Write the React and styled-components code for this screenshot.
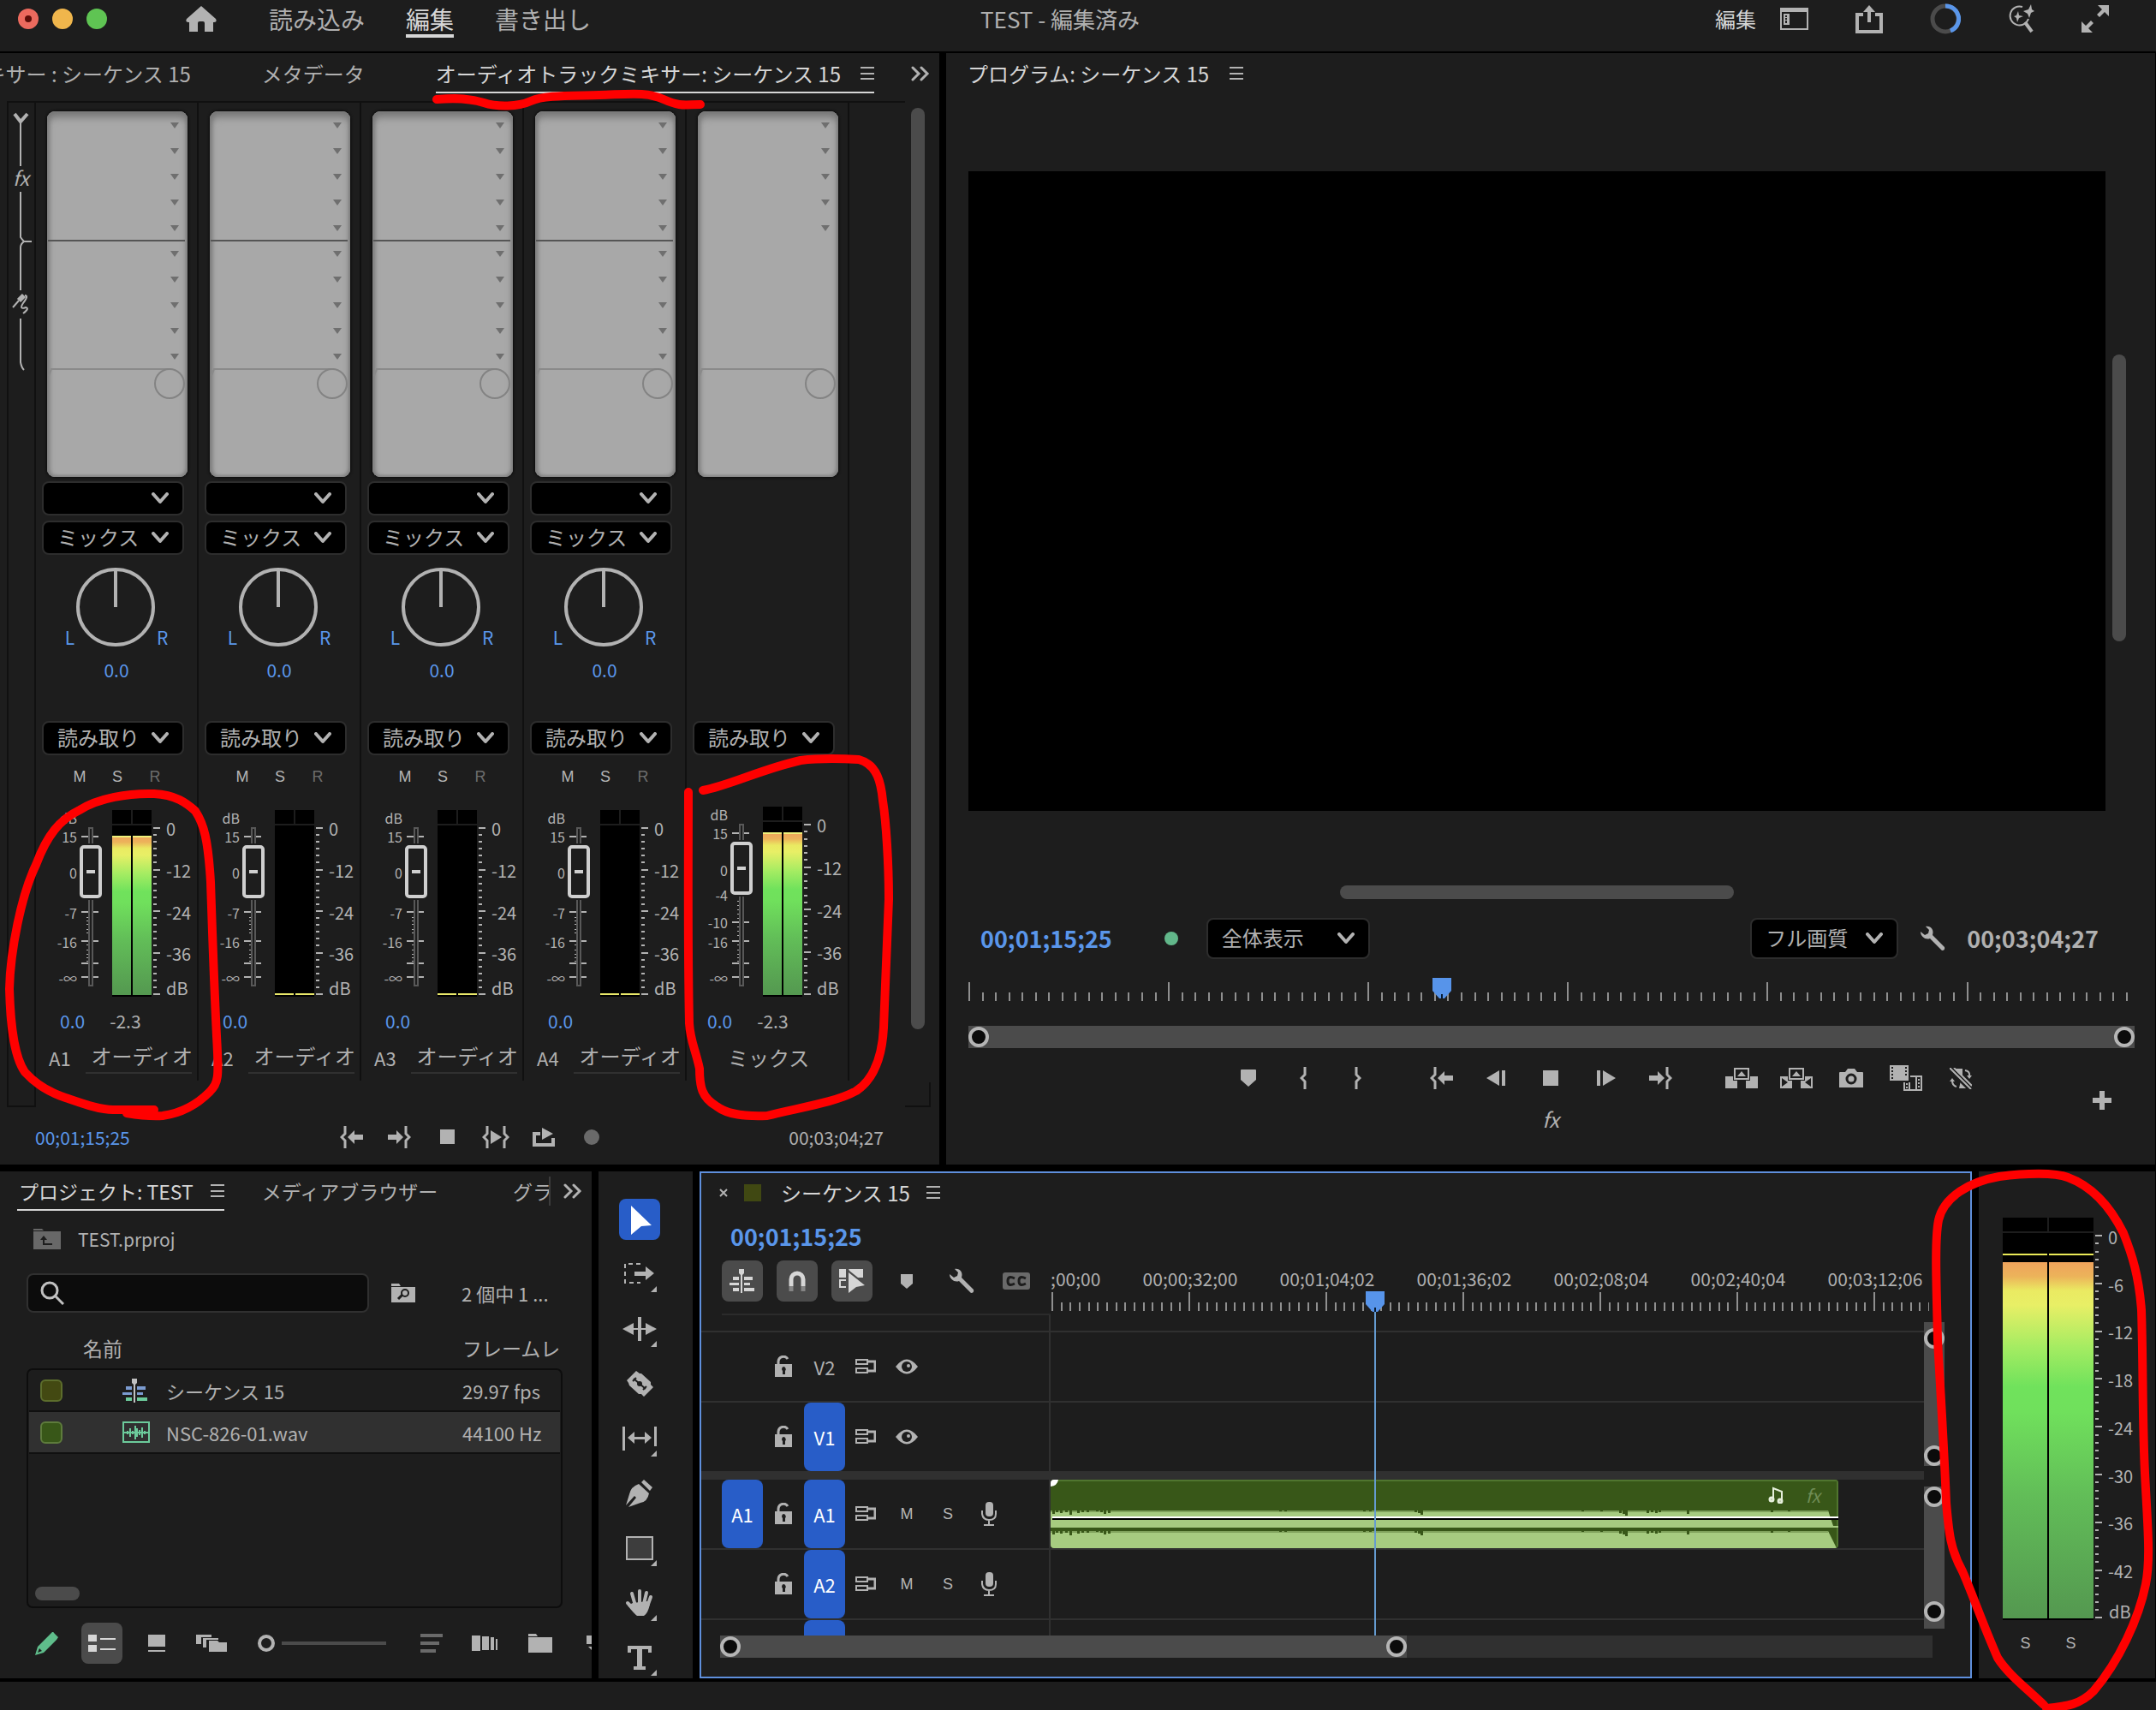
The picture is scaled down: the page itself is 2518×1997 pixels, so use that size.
import styled, { createGlobalStyle } from "styled-components";

const colors = {
    panel: "#1d1d1d",
    line: "#101010",
    track: "#303030",
    bar: "#4b4b4b",
    icon: "#b2b2b2",
    text: "#b0b0b0",
    bright: "#d6d6d6",
    blue: "#5a96ea",
    fill: "#285dc8",
};

const GlobalStyle = createGlobalStyle`
    * {
        box-sizing: border-box;
    }
    body {
        margin: 0;
        background: #000000;
        color: ${colors.text};
        font-family: "Noto Sans CJK JP", "Noto Sans", sans-serif;
        font-size: 21px;
        line-height: 30px;
    }
    button {
        display: flex;
        align-items: center;
        justify-content: center;
        padding: 0;
        border: 0;
        background: none;
        color: inherit;
        font: inherit;
    }
    svg {
        display: block;
        flex: none;
    }
`;

/* ---------- shared parts ---------- */

const Page = styled.div`
    position: relative;
    display: flex;
    flex-direction: column;
    min-height: 100vh;
    overflow: hidden;
`;

const Panel = styled.section`
    display: flex;
    flex-direction: column;
    min-width: 0;
    background: ${colors.panel};
    overflow: hidden;
`;

const TopRow = styled.div`
    display: grid;
    grid-template-columns: minmax(0, 1097fr) minmax(0, 1412fr);
    gap: 8px;
    height: 1298px;
    margin: 2px 1px 8px 0;
`;

const BottomRow = styled.div`
    display: grid;
    grid-template-columns: 691px 110px minmax(0, 1fr) 206px;
    gap: 8px;
    height: 592px;
    margin: 0 1px 4px 0;
`;

const StatusBar = styled.footer`
    flex: 1;
    min-height: 33px;
    background: ${colors.panel};
`;

const Timecode = styled.span`
    color: ${({ $dim }) => ($dim ? colors.text : colors.blue)};
    font-size: ${({ $big }) => ($big ? "27px" : "21px")};
    font-weight: ${({ $big }) => ($big ? 700 : 400)};
    white-space: nowrap;
`;

const Thumb = styled.div`
    width: ${({ $w }) => $w}px;
    height: ${({ $h }) => $h}px;
    border-radius: 8px;
    background: ${colors.bar};
    flex: none;
`;

const SelectBox = styled.label`
    display: grid;
    align-items: center;
    width: ${({ $w }) => $w || 166}px;
    height: ${({ $tall }) => ($tall ? 48 : 40)}px;
    flex: none;

    select,
    svg {
        grid-area: 1 / 1;
    }
    svg {
        justify-self: end;
        margin-right: 18px;
        pointer-events: none;
    }
    select {
        appearance: none;
        width: 100%;
        height: 100%;
        padding: 0 40px 2px 16px;
        border: 2px solid #2d2d2d;
        border-radius: 8px;
        background: #000000;
        color: ${colors.text};
        font: inherit;
        font-size: 24px;
    }
`;

const TabBar = styled.div`
    display: flex;
    align-items: center;
    height: ${({ $h }) => $h || 56}px;
    padding-left: ${({ $left }) => $left || 0}px;
    padding-bottom: ${({ $h }) => ($h ? 0 : 8)}px;
    font-size: 24px;
    white-space: nowrap;
    flex: none;
`;

const Tab = styled.button`
    height: 46px;
    gap: ${({ $gap }) => $gap || 23}px;
    color: ${({ $active }) => ($active ? colors.bright : colors.text)};
    box-shadow: ${({ $line }) =>
        $line ? `inset 0 -2px ${colors.bright}` : "none"};
    white-space: nowrap;
`;

const Knobs = styled.div`
    display: flex;
    flex-direction: ${({ $vertical }) => ($vertical ? "column" : "row")};
    align-items: center;
    justify-content: space-between;
    background: ${colors.bar};
    flex: none;
`;

const Knob = styled.i`
    width: 24px;
    height: 24px;
    border: 4px solid #b5b5b5;
    border-radius: 50%;
    background: #0b0b0b;
`;

/* ---------- icons ---------- */

function Svg({ w, h, children, ...rest }) {
    return (
        <svg
            width={w}
            height={h}
            viewBox={`0 0 ${w} ${h}`}
            fill={colors.icon}
            aria-hidden="true"
            {...rest}
        >
            {children}
        </svg>
    );
}

const Chevron = () => (
    <Svg w={20} h={14}>
        <path d="M2 2L10 11L18 2" fill="none" stroke={colors.icon} strokeWidth="4" strokeLinecap="round" strokeLinejoin="round" />
    </Svg>
);
const Burger = () => (
    <Svg w={16} h={16}>
        <path d="M0 0h16v2H0zM0 7h16v2H0zM0 13h16v2H0z" />
    </Svg>
);
const More = () => (
    <Svg w={22} h={18}>
        <path d="M2 2L9 9L2 16M12 2L19 9L12 16" fill="none" stroke={colors.icon} strokeWidth="3" strokeLinecap="round" />
    </Svg>
);
const HomeIcon = () => (
    <Svg w={36} h={30}>
        <path d="M18 0L35 15Q37 19 33 19H32V30H22V20Q22 18 20 18H16Q14 18 14 20V30H4V19H3Q-1 19 1 15Z" />
    </Svg>
);
const WorkspaceIcon = () => (
    <Svg w={33} h={26}>
        <path d="M0 0h33v26H0zM2 5v19h29V5z" fillRule="evenodd" />
        <path d="M4 7h7v13H4zM6 9v2h2V9zM6 12v2h2v-2zM6 15v3h2v-3z" fillRule="evenodd" />
    </Svg>
);
const ShareIcon = () => (
    <Svg w={32} h={33}>
        <path d="M16 0L23 8H18V20H14V8H9Z" />
        <path d="M0 9h9v4H4v16h24V13h-5V9h9v24H0z" />
    </Svg>
);
const ProgressIcon = () => (
    <Svg w={36} h={36} fill="none" strokeWidth="5">
        <circle cx="18" cy="18" r="15" stroke="#4b4b4b" />
        <path d="M18 3A15 15 0 0 1 24 32" stroke={colors.blue} />
    </Svg>
);
const SparkSearchIcon = () => (
    <Svg w={31} h={34}>
        <path d="M17 3A11 11 0 1 0 24 17" fill="none" stroke={colors.icon} strokeWidth="2" />
        <path d="M12 8L13 13L18 14L13 16L11 21L10 16L7 14L10 13ZM27 0L28 6L31 8L27 10L25 16L23 11L18 8L24 6Z" />
        <path d="M20 21L28 32" stroke={colors.icon} strokeWidth="4" />
    </Svg>
);
const ExpandIcon = () => (
    <Svg w={32} h={32}>
        <path d="M19 0H32V13L27 8L21 14L18 11L24 5ZM13 32H0V19L5 24L11 18L14 21L8 27Z" />
    </Svg>
);
const brace = "M6 0V9L2 13L6 17V26";
const GoIn = ({ flip }) => (
    <Svg w={27} h={26}>
        <g transform={flip ? "translate(27 0) scale(-1 1)" : undefined}>
            <path d={brace} fill="none" stroke={colors.icon} strokeWidth="3" />
            <path d="M9 13L17 5V10H27V16H17V21Z" />
        </g>
    </Svg>
);
const Brace = ({ flip }) => (
    <Svg w={8} h={26}>
        <path
            d={brace}
            transform={flip ? "translate(8 0) scale(-1 1)" : undefined}
            fill="none"
            stroke={colors.icon}
            strokeWidth="3"
        />
    </Svg>
);
const PlayInOut = () => (
    <Svg w={32} h={26}>
        <path d={brace} fill="none" stroke={colors.icon} strokeWidth="3" />
        <path d={brace} transform="translate(32 0) scale(-1 1)" fill="none" stroke={colors.icon} strokeWidth="3" />
        <path d="M10 5L23 13L10 21Z" />
    </Svg>
);
const LoopIcon = () => (
    <Svg w={26} h={22}>
        <path d="M0 5H9V9H4V18H22V12H26V22H0ZM11 0L24 7L11 14Z" />
    </Svg>
);
const StopIcon = ({ s = 17 }) => (
    <Svg w={s} h={s}>
        <rect width={s} height={s} />
    </Svg>
);
const StepIcon = ({ flip }) => (
    <Svg w={23} h={20}>
        <path d="M0 10L15 1V19ZM18 1h4v18h-4z" transform={flip ? "translate(23 0) scale(-1 1)" : undefined} />
    </Svg>
);
const MarkerIcon = () => (
    <Svg w={18} h={20}>
        <path d="M1 0H17Q18 0 18 1V12L9 20L0 12V1Q0 0 1 0Z" />
    </Svg>
);
const LiftIcon = ({ extract }) => (
    <Svg w={38} h={24}>
        <path d="M10 0H28V14H10ZM12 2V12H26V2Z" fillRule="evenodd" />
        <path d="M19 4L24 10H14ZM0 10H9V15H14V24H0ZM29 10H38V24H24V15H29Z" />
        {extract && <path d="M2 12L9 17L2 22ZM36 12L29 17L36 22Z" fill={colors.panel} />}
    </Svg>
);
const CameraIcon = () => (
    <Svg w={28} h={22}>
        <path d="M0 5Q0 4 1 4H7L10 0H18L21 4H27Q28 4 28 5V22H0Z" />
        <circle cx="14" cy="12" r="5" fill="none" stroke={colors.panel} strokeWidth="3" />
    </Svg>
);
const CompareIcon = () => (
    <Svg w={38} h={30}>
        <rect width="22" height="18" />
        <path d="M2 2h2v2H2zM2 6h2v2H2zM2 10h2v2H2zM2 14h2v2H2zM18 2h2v2h-2zM18 6h2v2h-2zM18 10h2v2h-2z" fill={colors.panel} />
        <path d="M24 12H38V30H16V20H18V28H36V14H24Z" />
        <path d="M19 21h2v2h-2zM19 25h2v2h-2zM22 20h2v8h-2zM33 16h2v2h-2zM33 20h2v2h-2zM33 24h2v2h-2zM30 14h2v14h-2z" />
    </Svg>
);
const ProxyIcon = () => (
    <Svg w={26} h={25}>
        <path d="M5 1H15V10ZM11 24H22V18L13 15Z" />
        <path d="M18 3Q24 4 23 10M3 15Q3 21 8 22" fill="none" stroke={colors.icon} strokeWidth="2" />
        <path d="M20 9H26L23 13ZM0 16H6L3 12Z" />
        <path d="M1 1L25 25" stroke={colors.panel} strokeWidth="7" />
        <path d="M0 0L25 25M5 0L26 21" stroke={colors.icon} strokeWidth="2" />
    </Svg>
);
const PlusIcon = () => (
    <Svg w={22} h={22}>
        <path d="M8 0h6v8h8v6h-8v8H8v-8H0V8h8z" />
    </Svg>
);
const WrenchIcon = () => (
    <Svg w={30} h={30}>
        <path d="M7 1C13 0 17 5 15 11L29 25Q30 29 26 29L12 15C7 17 1 13 1 7L6 11L10 9L11 5Z" />
    </Svg>
);

/* ---------- title bar ---------- */

const TitleBar = styled.header`
    display: grid;
    grid-template-columns: minmax(0, 1145fr) minmax(0, 1373fr);
    height: 60px;
    background: ${colors.panel};
    font-size: 28px;
    line-height: 44px;
`;

const TitleSide = styled.div`
    display: flex;
    align-items: center;
    height: 44px;
    padding-left: ${({ $left }) => $left || 0}px;
`;

const FileName = styled.span`
    font-size: 26px;
`;

const Light = styled.button`
    width: 24px;
    height: 24px;
    margin-right: 16px;
    border-radius: 50%;
    background: ${({ $color }) => $color};

    &::after {
        content: "";
        width: 8px;
        height: 8px;
        border-radius: 50%;
        background: ${({ $edited }) => ($edited ? "#5c0d08" : "transparent")};
    }
`;

const HomeButton = styled.button`
    width: 36px;
    margin: 0 61px 0 76px;
`;

const Nav = styled.nav`
    display: flex;
    gap: 48px;
`;

const NavLink = styled.a`
    color: ${({ $active }) => ($active ? colors.bright : colors.text)};
    text-decoration: none;
    box-shadow: ${({ $active }) =>
        $active ? `inset 0 -4px ${colors.bright}` : "none"};
`;

const TitleTools = styled.div`
    display: flex;
    align-items: center;
    gap: 55px;
    margin-left: auto;
    padding-right: 55px;
`;

const Workspace = styled.button`
    gap: 28px;
    color: ${colors.bright};
    font-size: 24px;
`;

function AppTitleBar() {
    return (
        <TitleBar>
            <TitleSide $left={21}>
                <Light $color="#ec6a5e" $edited aria-label="閉じる" />
                <Light $color="#f0b64c" aria-label="しまう" />
                <Light $color="#5fc453" aria-label="拡大" />
                <HomeButton aria-label="ホーム">
                    <HomeIcon />
                </HomeButton>
                <Nav>
                    <NavLink href="#import">読み込み</NavLink>
                    <NavLink href="#edit" $active>
                        編集
                    </NavLink>
                    <NavLink href="#export">書き出し</NavLink>
                </Nav>
            </TitleSide>
            <TitleSide>
                <FileName>TEST - 編集済み</FileName>
                <TitleTools>
                    <Workspace>
                        編集
                        <WorkspaceIcon />
                    </Workspace>
                    <button aria-label="クイック書き出し">
                        <ShareIcon />
                    </button>
                    <button aria-label="進行状況">
                        <ProgressIcon />
                    </button>
                    <button aria-label="検索">
                        <SparkSearchIcon />
                    </button>
                    <button aria-label="フルスクリーン">
                        <ExpandIcon />
                    </button>
                </TitleTools>
            </TitleSide>
        </TitleBar>
    );
}

/* ---------- audio track mixer ---------- */

const MixerTabs = styled(TabBar)`
    justify-content: flex-end;
    padding-right: 11px;
    gap: 83px;

    > :last-child {
        margin-left: -40px;
    }
`;

const MixerBody = styled.div`
    display: flex;
    margin-left: 8px;
    height: 1175px;
`;

const Gutter = styled.div`
    width: 32px;
    border: solid ${colors.line};
    border-width: 2px 0 2px 2px;
    flex: none;
`;

const Strips = styled.div`
    display: flex;
    flex: 1;
    height: 1144px;
    border-top: 2px solid ${colors.line};
`;

const Strip = styled.div`
    width: 190px;
    padding-left: 7px;
    border-left: 2px solid ${colors.line};
    flex: none;
`;

const StripEnd = styled.div`
    border-left: 2px solid ${colors.line};
`;

const GutterFoot = styled.div`
    width: 2px;
    height: 1175px;
    margin-right: -2px;
    background: ${colors.line};
`;

const Rack = styled.div`
    width: 164px;
    height: 427px;
    margin: 10px 0 5px 6px;
    border-radius: 9px;
    background: #a8a8a8;
    box-shadow:
        inset 0 7px 8px #777777,
        inset 3px 0 4px #858585,
        inset -2px -2px 3px #8a8a8a,
        0 0 3px 1px #0c0c0c;
`;

const Sends = styled.div`
    display: flex;
    flex-direction: column;
    gap: 6px;
    height: 86px;
`;

const Pan = styled.div`
    display: flex;
    flex-direction: column;
    align-items: center;
    width: 174px;
    height: 194px;
    padding-top: 15px;
    color: ${colors.blue};
`;

const PanRow = styled.div`
    display: flex;
    align-items: flex-end;
    gap: 2px;
    height: 96px;
    margin-bottom: 8px;

    button {
        align-self: flex-start;
    }
`;

const Modes = styled.div`
    display: flex;
    gap: 28px;
    height: 50px;
    padding-left: 36px;
`;

const Mode = styled.button`
    width: 16px;
    color: ${({ $off }) => ($off ? "#6c6c6c" : "#b5b5b5")};
    font-family: "Liberation Sans", sans-serif;
    font-size: 18px;
`;

const FaderBox = styled.div`
    position: relative;
    height: 238px;
`;

const FaderInput = styled.input`
    position: absolute;
    left: 44px;
    top: ${({ $top }) => $top}px;
    width: 26px;
    height: 202px;
    margin: 0;
    appearance: none;
    background: none;
    writing-mode: vertical-lr;
    direction: rtl;

    &::-webkit-slider-thumb {
        appearance: none;
        width: 26px;
        height: 62px;
        border: 4px solid #cfcfcf;
        border-radius: 5px;
        background: linear-gradient(#cfcfcf, #cfcfcf) center / 10px 4px
            no-repeat ${colors.panel};
        box-shadow: 0 0 0 2px ${colors.panel};
    }
`;

const Levels = styled.div`
    display: flex;
    align-items: center;
    gap: 29px;
    height: 44px;
    padding-left: ${({ $mix }) => ($mix ? 17 : 21)}px;
`;

const TrackName = styled.div`
    display: flex;
    align-items: center;
    gap: ${({ $mix }) => ($mix ? 0 : 17)}px;
    height: 42px;
    padding-left: ${({ $mix }) => ($mix ? 41 : 8)}px;
    font-size: ${({ $mix }) => ($mix ? 24 : 22)}px;
`;

const NameInput = styled.input`
    width: 124px;
    height: 38px;
    padding: 0 0 4px 7px;
    border: 0;
    border-bottom: 2px solid #303030;
    background: none;
    color: ${colors.text};
    font: inherit;
    font-size: 24px;
`;

const ScrollColumn = styled.div`
    display: flex;
    flex-direction: column;
    align-items: center;
    justify-content: space-between;
    width: 30px;
    margin-right: 10px;
    padding-top: 8px;
`;

const Corner = styled.div`
    width: 30px;
    height: 29px;
    border: solid ${colors.line};
    border-width: 0 2px 2px 0;
`;

const Transport = styled.div`
    display: flex;
    align-items: center;
    flex: 1;
    padding: 2px 65px 0 41px;

    > :last-child {
        margin-left: auto;
    }
`;

const TransportButtons = styled.div`
    display: flex;
    margin-left: 231px;

    button {
        width: 56px;
    }
`;

function MeterGradient({ id }) {
    return (
        <linearGradient id={id} x1="0" y1="0" x2="0" y2="1">
            <stop offset="0" stopColor="#efa35c" />
            <stop offset="0.04" stopColor="#ecb35a" />
            <stop offset="0.08" stopColor="#eaea62" />
            <stop offset="0.12" stopColor="#e8ef66" />
            <stop offset="0.24" stopColor="#a4ec62" />
            <stop offset="0.35" stopColor="#70e25c" />
            <stop offset="0.42" stopColor="#70e05c" />
            <stop offset="0.65" stopColor="#62be58" />
            <stop offset="1" stopColor="#549850" />
        </linearGradient>
    );
}

const trackScale = {
    top: 0,
    ticks: [45, 133, 167, 193, 209],
    minor: [139, 143, 147, 153, 157, 171, 177, 182, 186, 190],
    labels: [["dB", 24], ["15", 46], ["0", 88], ["-7", 135], ["-16", 169], ["-∞", 211]],
    levels: [35, 84, 133, 181, 229],
};
const mixScale = {
    top: -4,
    ticks: [41, 145, 167, 193, 209],
    minor: [120, 125, 130, 135, 140, 150, 155, 160, 171, 177, 182, 186, 190],
    labels: [["dB", 20], ["15", 42], ["0", 85], ["-4", 114], ["-10", 146], ["-16", 169], ["-∞", 211]],
    levels: [31, 81, 131, 180, 229],
};

function Fader({ id, mix, live }) {
    const s = mix ? mixScale : trackScale;
    const top = s.top;
    const span = s.levels[4] - s.levels[0];
    return (
        <FaderBox>
            <Svg w={181} h={238} shapeRendering="crispEdges">
                <defs>
                    <MeterGradient id={id} />
                </defs>
                <path d={`M54 ${34 + top}H60V220H54ZM56 ${36 + top}V218H58V${36 + top}Z`} fill="#585858" fillRule="evenodd" />
                {s.ticks.map((y) => (
                    <path key={y} d={`M46 ${y - 1}h8v2h-8zM60 ${y - 1}h6v2h-6z`} />
                ))}
                {s.minor.map((y) => (
                    <rect key={y} x="52" y={y} width="2" height="1" />
                ))}
                <rect x="82" y={14 + top} width="46" height={218 - top} fill="#000" />
                <path d={`M104 ${14 + top}h2v16h-2zM82 ${30 + top}h46v2h-46z`} fill={colors.panel} />
                {live ? (
                    <>
                        <path d={`M82 ${44 + top}h22V230h-22zM106 ${44 + top}h22V230h-22z`} fill={`url(#${id})`} />
                        <path d={`M82 ${44 + top}h22v2h-22zM106 ${44 + top}h22v2h-22z`} fill="#eef07a" />
                    </>
                ) : (
                    <path d="M82 228h22v2h-22zM106 228h22v2h-22z" fill="#e9e86a" />
                )}
                {Array.from({ length: 25 }, (_, i) => (
                    <rect
                        key={i}
                        x="130"
                        y={Math.round(s.levels[0] - 1 + (span * i) / 24)}
                        width={i % 6 ? 4 : 8}
                        height="2"
                    />
                ))}
                <g fontSize="16" textAnchor="end">
                    {s.labels.map(([text, y]) => (
                        <text key={text} x="41" y={y + 6}>
                            {text}
                        </text>
                    ))}
                </g>
                <g fontSize="20">
                    {["0", "-12", "-24", "-36"].map((text, i) => (
                        <text key={text} x="145" y={s.levels[i] + 9}>
                            {text}
                        </text>
                    ))}
                    <text x="145" y="230">
                        dB
                    </text>
                </g>
            </Svg>
            <FaderInput
                type="range"
                $top={26 + top}
                defaultValue={79}
                aria-label="ボリューム"
            />
        </FaderBox>
    );
}

function RackSlots({ mix }) {
    const rows = mix ? 5 : 10;
    return (
        <Svg w={164} h={427}>
            {Array.from({ length: rows }, (_, i) => (
                <path key={i} d={`M144 ${13 + i * 30}h10l-5 7z`} fill="#6f6f6f" />
            ))}
            {!mix && <rect x="1" y="150" width="160" height="2" fill="#555" />}
            <path d="M2 309L5 301H145" fill="none" stroke="#8a8a8a" strokeWidth="2" />
            <circle cx="143" cy="318" r="17" fill="none" stroke="#838383" strokeWidth="2" />
        </Svg>
    );
}

function Select({ value, label, w, tall }) {
    return (
        <SelectBox $w={w} $tall={tall}>
            <select aria-label={label} defaultValue={value}>
                <option>{value}</option>
            </select>
            <Chevron />
        </SelectBox>
    );
}

function ChannelStrip({ name, mix, live }) {
    return (
        <Strip>
            <Rack>
                <RackSlots mix={mix} />
            </Rack>
            <Sends>
                {!mix && <Select value="" label="入力" />}
                {!mix && <Select value="ミックス" label="出力" />}
            </Sends>
            <Pan>
                {!mix && (
                    <>
                        <PanRow>
                            <span>L</span>
                            <button aria-label="パン">
                                <Svg w={92} h={92} fill="none" stroke={colors.icon} strokeWidth="4">
                                    <circle cx="46" cy="46" r="44" />
                                    <path d="M46 2V46" />
                                </Svg>
                            </button>
                            <span>R</span>
                        </PanRow>
                        <span>0.0</span>
                    </>
                )}
            </Pan>
            <Select value="読み取り" label="オートメーションモード" />
            <Modes>
                {!mix && (
                    <>
                        <Mode>M</Mode>
                        <Mode>S</Mode>
                        <Mode $off>R</Mode>
                    </>
                )}
            </Modes>
            <Fader id={`level-${name}`} mix={mix} live={live} />
            <Levels $mix={mix}>
                <Timecode>0.0</Timecode>
                {live && <span>-2.3</span>}
            </Levels>
            <TrackName $mix={mix}>
                {mix ? (
                    "ミックス"
                ) : (
                    <>
                        {name}
                        <NameInput defaultValue="オーディオ" aria-label={name} />
                    </>
                )}
            </TrackName>
        </Strip>
    );
}

function Mixer() {
    return (
        <Panel>
            <MixerTabs>
                <Tab>オーディオクリップミキサー : シーケンス 15</Tab>
                <Tab>メタデータ</Tab>
                <Tab $active $line>
                    オーディオトラックミキサー: シーケンス 15
                    <Burger />
                </Tab>
                <button aria-label="その他のパネル">
                    <More />
                </button>
            </MixerTabs>
            <MixerBody>
                <Gutter>
                    <Svg w={30} h={330} fill="none" stroke={colors.icon} strokeWidth="2">
                        <path d="M7 13L14 22L22 13" strokeWidth="4" />
                        <path d="M14 22V74M14 104V157Q16 160 18 162H27M18 162Q14 165 14 169V219M14 252V303Q15 309 18 312" />
                        <path d="M5 239L12 231M19 225Q24 225 17 234Q12 242 20 239Q25 240 17 246" />
                        <path d="M12 231L18 225" strokeWidth="6" />
                        <text x="5" y="97" fontSize="23" fontStyle="italic" fill={colors.icon} stroke="none">
                            fx
                        </text>
                    </Svg>
                </Gutter>
                <GutterFoot />
                <Strips>
                    <ChannelStrip name="A1" live />
                    <ChannelStrip name="A2" />
                    <ChannelStrip name="A3" />
                    <ChannelStrip name="A4" />
                    <ChannelStrip name="MIX" mix live />
                    <StripEnd />
                </Strips>
                <ScrollColumn>
                    <Thumb $w={16} $h={1076} />
                    <Corner />
                </ScrollColumn>
            </MixerBody>
            <Transport>
                <Timecode>00;01;15;25</Timecode>
                <TransportButtons>
                    <button aria-label="インへ移動">
                        <GoIn />
                    </button>
                    <button aria-label="アウトへ移動">
                        <GoIn flip />
                    </button>
                    <button aria-label="停止">
                        <StopIcon />
                    </button>
                    <button aria-label="インからアウトを再生">
                        <PlayInOut />
                    </button>
                    <button aria-label="ループ">
                        <LoopIcon />
                    </button>
                    <button aria-label="録音">
                        <Svg w={18} h={18}>
                            <circle cx="9" cy="9" r="9" fill="#6a6a6a" />
                        </Svg>
                    </button>
                </TransportButtons>
                <Timecode $dim>00;03;04;27</Timecode>
            </Transport>
        </Panel>
    );
}

/* ---------- program monitor ---------- */

const Stage = styled.div`
    display: flex;
    align-items: center;
    gap: 8px;
    margin-top: 82px;
    padding: 0 34px 0 26px;
`;

const Screen = styled.div`
    flex: 1;
    aspect-ratio: 16 / 9;
    background: #000000;
`;

const StageThumb = styled(Thumb)`
    margin-top: 16px;
`;

const StageScroll = styled.div`
    display: flex;
    justify-content: center;
    padding: 87px 58px 22px 26px;
`;

const MonitorBar = styled.div`
    display: flex;
    align-items: center;
    padding: 0 66px 0 40px;
`;

const Dot = styled.i`
    width: 16px;
    height: 16px;
    margin: 0 33px 0 61px;
    border-radius: 50%;
    background: #62b78a;
`;

const MonitorRight = styled.div`
    display: flex;
    align-items: center;
    gap: 25px;
    margin-left: auto;
`;

const Ruler = styled.div`
    position: relative;
    height: 27px;
    margin: 22px 30px 29px 26px;
`;

const Playhead = styled.div`
    position: absolute;
    top: 0;
    left: ${({ $at }) => $at}%;
    display: flex;
    flex-direction: column;
    align-items: center;
    width: 22px;
    margin-left: -11px;

    &::after {
        content: "";
        width: 2px;
        height: ${({ $line }) => $line || 0}px;
        background: #659bd0;
    }
`;

const MonitorZoom = styled(Knobs)`
    height: 26px;
    margin: 0 24px 0 26px;
`;

const MonitorButtons = styled.div`
    display: grid;
    grid-template-columns: 1fr 320px 1fr;
    margin-top: 20px;
`;

const ButtonGroup = styled.div`
    display: flex;
    height: 30px;
    justify-content: ${({ $end }) => ($end ? "flex-end" : "flex-start")};
    padding: ${({ $end }) => ($end ? "0 33px 0 0" : "0")};

    button {
        width: 64px;
    }
`;

const EditGroup = styled.div`
    display: flex;
    justify-content: space-between;
    padding: 0 51px 0 31px;
`;

const AddButton = styled.button`
    height: 22px;
    margin-top: 30px;
`;

const FxButton = styled.button`
    align-self: center;
    margin-top: -4px;
    font-size: 24px;
    font-style: italic;
`;

function Ticks({ step, h, major, minor }) {
    return (
        <svg width="100%" height={h} fill="#8f8f8f" shapeRendering="crispEdges" aria-hidden="true">
            {Array.from({ length: 200 }, (_, i) => {
                const len = i % 15 ? minor : major;
                return <rect key={i} x={Math.round(i * step)} y={h - len} width="2" height={len} />;
            })}
        </svg>
    );
}

const PlayheadMark = () => (
    <Svg w={22} h={24}>
        <path d="M0 0H22V15L14 24H8L0 15Z" fill="#5794ea" />
        <path d="M11 19V24" stroke="#061b33" strokeWidth="2" />
    </Svg>
);

function ProgramMonitor() {
    return (
        <Panel>
            <TabBar $left={25}>
                <Tab $active $gap={24}>
                    プログラム: シーケンス 15
                    <Burger />
                </Tab>
            </TabBar>
            <Stage>
                <Screen />
                <StageThumb $w={16} $h={335} />
            </Stage>
            <StageScroll>
                <Thumb $w={460} $h={16} />
            </StageScroll>
            <MonitorBar>
                <Timecode $big>00;01;15;25</Timecode>
                <Dot />
                <Select value="全体表示" label="ズームレベル" w={191} tall />
                <MonitorRight>
                    <Select value="フル画質" label="再生時の解像度" w={173} tall />
                    <button aria-label="設定">
                        <WrenchIcon />
                    </button>
                    <Timecode $big $dim>
                        00;03;04;27
                    </Timecode>
                </MonitorRight>
            </MonitorBar>
            <Ruler>
                <Ticks step={15.54} h={27} major={22} minor={10} />
                <Playhead $at={40.8}>
                    <PlayheadMark />
                </Playhead>
            </Ruler>
            <MonitorZoom>
                <Knob />
                <Knob />
            </MonitorZoom>
            <MonitorButtons>
                <ButtonGroup $end>
                    <button aria-label="マーカーを追加">
                        <MarkerIcon />
                    </button>
                    <button aria-label="インをマーク">
                        <Brace />
                    </button>
                    <button aria-label="アウトをマーク">
                        <Brace flip />
                    </button>
                </ButtonGroup>
                <ButtonGroup>
                    <button aria-label="インへ移動">
                        <GoIn />
                    </button>
                    <button aria-label="1 フレーム前へ">
                        <StepIcon />
                    </button>
                    <button aria-label="停止">
                        <StopIcon s={18} />
                    </button>
                    <button aria-label="1 フレーム先へ">
                        <StepIcon flip />
                    </button>
                    <button aria-label="アウトへ移動">
                        <GoIn flip />
                    </button>
                </ButtonGroup>
                <EditGroup>
                    <ButtonGroup>
                        <button aria-label="リフト">
                            <LiftIcon />
                        </button>
                        <button aria-label="抽出">
                            <LiftIcon extract />
                        </button>
                        <button aria-label="フレームを書き出し">
                            <CameraIcon />
                        </button>
                        <button aria-label="比較表示">
                            <CompareIcon />
                        </button>
                        <button aria-label="プロキシの切り替え">
                            <ProxyIcon />
                        </button>
                    </ButtonGroup>
                    <AddButton aria-label="ボタンエディター">
                        <PlusIcon />
                    </AddButton>
                </EditGroup>
            </MonitorButtons>
            <FxButton>fx</FxButton>
        </Panel>
    );
}

/* ---------- project ---------- */

const ProjectTabs = styled(TabBar)`
    padding: 0 11px 0 20px;
    font-size: 23px;
`;

const ProjectTab = styled(Tab)`
    padding-left: 2px;
    margin-right: 44px;
    flex: none;
`;

const CutTab = styled(Tab)`
    justify-content: flex-start;
    width: 44px;
    height: 34px;
    margin: 0 15px 0 auto;
    border-right: 2px solid #3c3c3c;
    overflow: hidden;
`;

const BinPath = styled.div`
    display: flex;
    align-items: center;
    gap: 20px;
    height: 66px;
    padding-left: 39px;
    font-size: 21px;
`;

const SearchRow = styled.div`
    display: flex;
    align-items: center;
    height: 46px;
    margin: 7px 0 0 31px;
    font-size: 22px;
`;

const SearchBox = styled.label`
    display: flex;
    align-items: center;
    gap: 12px;
    width: 400px;
    height: 46px;
    margin-right: 26px;
    padding: 0 14px;
    border: 2px solid #303030;
    border-radius: 8px;
    background: #0c0c0c;

    input {
        flex: 1;
        min-width: 0;
        border: 0;
        background: none;
        color: inherit;
        font: inherit;
    }
`;

const Count = styled.span`
    margin-left: 54px;
`;

const ListArea = styled.div`
    position: relative;
    margin: 20px 34px 0 31px;
`;

const ListScroll = styled.div`
    position: absolute;
    left: 10px;
    bottom: 9px;
`;

const BinTable = styled.table`
    display: block;
    font-size: 22px;

    thead {
        display: block;
    }
    tr {
        display: grid;
        grid-template-columns: 63px 1fr 114px;
        align-items: center;
    }
    thead tr {
        height: 45px;
        margin: 0 3px;
        padding-bottom: 4px;
        font-size: 23px;
    }
    th {
        padding: 0;
        font-weight: 400;
        line-height: 36px;
        text-align: left;
        white-space: nowrap;
        overflow: hidden;
    }
    td {
        padding: 0;
    }
    tbody {
        display: block;
        height: 280px;
        border: 2px solid #0d0d0d;
        border-radius: 7px;
    }
`;

const BinRow = styled.tr`
    height: 49px;
    margin: 0 1px;
    border-bottom: 2px solid #101010;
    background: ${({ $selected }) => ($selected ? "#303030" : "none")};
`;

const Swatch = styled.span`
    display: block;
    width: 26px;
    height: 26px;
    margin-left: 13px;
    border: 2px solid ${({ $edge }) => $edge};
    border-radius: 6px;
    background: ${({ $color }) => $color};
`;

const ItemCell = styled.div`
    display: grid;
    grid-template-columns: 32px 1fr;
    align-items: center;
    gap: 19px;
    margin-left: 46px;
`;

const ProjectTools = styled.div`
    display: flex;
    align-items: center;
    height: 82px;
    padding-left: 41px;
`;

const ViewButton = styled.button`
    width: 48px;
    height: 48px;
    margin: 0 30px 0 27px;
    border-radius: 8px;
    background: ${colors.bar};
`;

const ZoomSlider = styled.input`
    appearance: none;
    width: 150px;
    height: 20px;
    margin: 0 40px 0 36px;
    background: linear-gradient(${colors.bar}, ${colors.bar}) right / 122px 4px
        no-repeat;

    &::-webkit-slider-thumb {
        appearance: none;
        width: 20px;
        height: 20px;
        border: 4px solid ${colors.icon};
        border-radius: 50%;
        background: ${colors.panel};
    }
`;

const Spaced = styled.button`
    margin-right: ${({ $gap }) => $gap}px;
`;

const SequenceIcon = ({ mono }) => {
    const a = mono ? colors.bright : "#7b9bd0";
    const b = mono ? colors.bright : "#6ccb9b";
    return (
        <Svg w={30} h={28}>
            <path d="M4 9h7v4H4zM17 9h10v4H17zM0 16h11v3H0zM17 16h7v3H17z" fill={a} />
            <path d="M4 22h7v4H4zM17 22h12v4H17z" fill={b} />
            <path d="M11 0H17V5L15 7V28H13V7L11 5Z" fill={mono ? colors.bright : "#c0c0c0"} />
        </Svg>
    );
};
const WaveIcon = () => (
    <Svg w={32} h={25} fill="none" stroke="#6ccb9b" strokeWidth="2">
        <rect x="1" y="1" width="30" height="23" />
        <path d="M2 13H30M6 11V15M9 8V18M12 11V15M15 5V21M17 8V18M20 10V16M23 7V19M26 11V15" />
    </Svg>
);
const FolderIcon = ({ children }) => (
    <Svg w={28} h={22}>
        <path d="M0 0H9L11 3H0ZM0 4H28V22H0Z" />
        {children}
    </Svg>
);

const bin = [
    { name: "シーケンス 15", rate: "29.97 fps", color: "#434912", edge: "#5c6d2c", Icon: SequenceIcon },
    { name: "NSC-826-01.wav", rate: "44100 Hz", color: "#385718", edge: "#5d7b3c", Icon: WaveIcon, selected: true },
];

function Project() {
    return (
        <Panel>
            <ProjectTabs $h={46}>
                <ProjectTab $active $line $gap={20}>
                    プロジェクト: TEST
                    <Burger />
                </ProjectTab>
                <Tab>メディアブラウザー</Tab>
                <CutTab>グラフィック</CutTab>
                <button aria-label="その他のパネル">
                    <More />
                </button>
            </ProjectTabs>
            <BinPath>
                <Svg w={32} h={24} fill="#686868">
                    <path d="M0 0H10L12 2H0ZM0 3H32V24H0Z" />
                    <path d="M12 8L16 13H13V17H22V19H11V13H8Z" fill="#1d1d1d" />
                </Svg>
                TEST.prproj
            </BinPath>
            <SearchRow>
                <SearchBox>
                    <Svg w={28} h={28} fill="none" stroke="#c0c0c0" strokeWidth="3">
                        <circle cx="11" cy="11" r="9" />
                        <path d="M18 18L27 27" />
                    </Svg>
                    <input type="search" aria-label="検索" />
                </SearchBox>
                <button aria-label="検索ビン">
                    <FolderIcon>
                        <path d="M8 18L13 13" stroke="#1d1d1d" strokeWidth="3" />
                        <circle cx="16" cy="11" r="4" fill="none" stroke="#1d1d1d" strokeWidth="2" />
                    </FolderIcon>
                </button>
                <Count>2 個中 1 ...</Count>
            </SearchRow>
            <ListArea>
                <BinTable>
                    <thead>
                        <tr>
                            <th />
                            <th>名前</th>
                            <th>フレームレート</th>
                        </tr>
                    </thead>
                    <tbody>
                        {bin.map(({ name, rate, color, edge, Icon, selected }) => (
                            <BinRow key={name} $selected={selected}>
                                <td>
                                    <Swatch $color={color} $edge={edge} />
                                </td>
                                <td>
                                    <ItemCell>
                                        <Icon />
                                        {name}
                                    </ItemCell>
                                </td>
                                <td>{rate}</td>
                            </BinRow>
                        ))}
                    </tbody>
                </BinTable>
                <ListScroll>
                    <Thumb $w={52} $h={16} />
                </ListScroll>
            </ListArea>
            <ProjectTools>
                <button aria-label="書き込み可">
                    <Svg w={27} h={27} fill="#5fbd8b">
                        <path d="M18 2L20 0Q21 -1 22 1L27 6L25 9L10 24L0 27L3 17ZM5 19L3 24L8 22Z" fillRule="evenodd" />
                    </Svg>
                </button>
                <ViewButton aria-label="リスト表示">
                    <Svg w={32} h={20} fill={colors.bright}>
                        <path d="M0 0h10v8H0zM0 12h10v8H0zM14 4h18v2H14zM14 16h18v2H14z" />
                    </Svg>
                </ViewButton>
                <Spaced $gap={36} aria-label="アイコン表示">
                    <Svg w={20} h={20}>
                        <path d="M0 0h20v14H0zM0 18h20v2H0z" />
                    </Svg>
                </Spaced>
                <button aria-label="フリーフォーム表示">
                    <Svg w={36} h={20}>
                        <path d="M0 0h18v3H6v8H0zM8 4h18v2H12v9H8z" />
                        <path d="M15 7H25L27 9H36V20H15Z" />
                    </Svg>
                </button>
                <ZoomSlider type="range" defaultValue={0} aria-label="サムネールサイズ" />
                <Spaced $gap={34} aria-label="並べ替え">
                    <Svg w={26} h={22} fill="#6a6a6a">
                        <path d="M0 0h26v4H0zM0 9h22v4H0zM0 18h18v4H0z" />
                    </Svg>
                </Spaced>
                <Spaced $gap={36} aria-label="シーケンスへオート編集">
                    <Svg w={30} h={18}>
                        <path d="M0 0h10v18H0zM12 1h8v16h-8zM22 2h4v15h-4zM28 4h2v13h-2z" />
                    </Svg>
                </Spaced>
                <Spaced $gap={40} aria-label="新規ビン">
                    <FolderIcon />
                </Spaced>
                <Svg w={6} h={18}>
                    <path d="M0 0h6v10H0zM2 13h4v4z" />
                </Svg>
            </ProjectTools>
        </Panel>
    );
}

/* ---------- tools ---------- */

const ToolList = styled(Panel)`
    align-items: center;
    gap: 16px;
    padding: 32px 14px 0 0;
`;

const Tool = styled.button`
    position: relative;
    width: 48px;
    height: 48px;
    border-radius: 8px;
    background: ${({ $active }) => ($active ? colors.fill : "none")};
    flex: none;

    &::after {
        content: "";
        position: absolute;
        right: 4px;
        bottom: 3px;
        border: solid transparent;
        border-width: 7px 0 0 7px;
        border-bottom: ${({ $more }) =>
            $more ? `7px solid ${colors.icon}` : "0"};
        border-top: 0;
    }
`;

const tools = [
    {
        name: "選択ツール",
        active: true,
        art: <path d="M14 8L38 31L26 32L14 42Z" fill="#fff" />,
    },
    {
        name: "トラックの前方選択ツール",
        more: true,
        art: (
            <>
                <path d="M25 12H7V34H25" fill="none" stroke={colors.icon} strokeWidth="2" strokeDasharray="5 4" />
                <path d="M18 21H31V15L41 23L31 31V26H18Z" />
            </>
        ),
    },
    {
        name: "リップルツール",
        more: true,
        art: <path d="M4 24L17 17V23H22V10H26V23H31V17L44 24L31 31V25H26V38H22V25H17V31Z" />,
    },
    {
        name: "レーザーツール",
        art: (
            <>
                <path d="M20 9L24 12L26 12L37 22L37 25L40 28L29 39L26 36L23 36L12 26L11 23L9 20Z" />
                <path d="M17 18L31 30M16 21L20 17M28 31L32 27" stroke={colors.panel} strokeWidth="2" />
                <circle cx="24" cy="24" r="3" fill={colors.panel} />
            </>
        ),
    },
    {
        name: "スリップツール",
        more: true,
        art: <path d="M4 10H7V38H4ZM41 10H44V33H41ZM10 23L18 16V22H30V16L38 23L30 30V25H18V30Z" />,
    },
    {
        name: "ペンツール",
        art: (
            <>
                <path d="M23 13L35 24Q33 34 25 35L11 40L20 29L18 27L8 38L12 25Q14 16 23 13ZM26 11L29 8L39 17L36 21Z" />
            </>
        ),
    },
    {
        name: "長方形ツール",
        more: true,
        art: <path d="M9 11H39V37H9Z" fill="#3d3d3d" stroke={colors.icon} strokeWidth="2" />,
    },
    {
        name: "手のひらツール",
        more: true,
        art: (
            <>
                <path d="M16 24L33 22L36 25Q34 36 29 39H21Q18 37 10 27Z" />
                <path
                    d="M19 27L15 13M24 25L24 10M29 25L32 12M33 28L37 17M19 33L10 24"
                    fill="none"
                    stroke={colors.icon}
                    strokeWidth="4"
                    strokeLinecap="round"
                />
            </>
        ),
    },
    {
        name: "文字ツール",
        more: true,
        art: (
            <>
                <path d="M10 10H38V18H34V14H27V34H31V38H17V34H21V14H14V18H10Z" />
            </>
        ),
    },
];

function Toolbar() {
    return (
        <ToolList>
            {tools.map(({ name, art, active, more }) => (
                <Tool key={name} aria-label={name} $active={active} $more={more}>
                    <Svg w={48} h={48}>
                        {art}
                    </Svg>
                </Tool>
            ))}
        </ToolList>
    );
}

/* ---------- timeline ---------- */

const TimelinePanel = styled(Panel)`
    border: 2px solid #5f8fdc;
`;

const SequenceTabs = styled(TabBar)`
    padding-left: 20px;
    gap: 18px;
`;

const SeqSwatch = styled.i`
    width: 20px;
    height: 20px;
    margin-right: 5px;
    background: #404812;
`;

const SeqTime = styled.div`
    display: flex;
    align-items: center;
    height: 56px;
    padding-left: 34px;
`;

const TimeHeader = styled.div`
    display: grid;
    grid-template-columns: 408px minmax(0, 1fr);
    height: 64px;
    padding-right: 48px;
`;

const SeqTools = styled.div`
    display: flex;
    align-items: flex-start;
    gap: 16px;
    margin-left: 24px;
    border-bottom: 2px solid #2b2b2b;
`;

const SeqTool = styled.button`
    width: 48px;
    height: 48px;
    border-radius: 8px;
    background: ${({ $on }) => ($on ? colors.bar : "none")};
    flex: none;
`;

const TimeRuler = styled.div`
    height: 59px;
    overflow: hidden;
`;

const TimeLabels = styled.div`
    display: flex;
    height: 37px;
    margin-left: -77px;
    padding-top: 6px;

    span {
        width: 160px;
        text-align: center;
        flex: none;
    }
`;

const TickRow = styled.div`
    padding-left: 1px;
`;

const TrackArea = styled.div`
    position: relative;
    display: grid;
    grid-template-columns: minmax(0, 1fr) 24px;
    height: 374px;
    padding-right: 30px;
`;

const TrackLane = styled.div`
    display: grid;
    grid-template-columns: 408px minmax(0, 1fr);
    height: ${({ $h }) => $h || 82}px;
    border-bottom: ${({ $thick }) => ($thick ? 10 : 2)}px solid ${colors.track};
    border-bottom-width: ${({ $last }) => ($last ? "0" : undefined)};
    overflow: hidden;
`;

const TrackHead = styled.div`
    display: grid;
    grid-template-columns: repeat(7, 48px);
    align-items: center;
    justify-items: center;
    padding-left: 24px;
    border-right: 2px solid ${colors.track};
`;

const Patch = styled.button`
    width: 48px;
    height: ${({ $cut }) => ($cut ? 40 : 80)}px;
    align-self: start;
    border-radius: 8px;
    background: ${({ $on }) => ($on ? colors.fill : "none")};
    color: ${({ $on }) => ($on ? "#ffffff" : colors.text)};
    font-size: 22px;
`;

const VerticalBars = styled.div`
    display: flex;
    flex-direction: column;
    gap: 24px;
    padding-top: 8px;
`;

const VBar = styled(Knobs)`
    width: 24px;
    height: ${({ $h }) => $h}px;
    padding: ${({ $pad }) => $pad};
`;

const Clip = styled.div`
    position: relative;
    width: ${({ $w }) => $w}%;
    height: 80px;
    border-radius: 4px;
    overflow: hidden;

    > svg {
        width: 100%;
    }
`;

const ClipBadges = styled.div`
    position: absolute;
    top: 3px;
    right: 21px;
    display: flex;
    align-items: center;
    gap: 26px;
    color: #6f8c55;
    font-style: italic;
`;

const PlayheadLayer = styled.div`
    position: absolute;
    inset: -28px 54px 0 408px;
    pointer-events: none;
`;

const TimelineZoom = styled.div`
    display: flex;
    height: 26px;
    margin: 0 44px 0 22px;
    background: ${colors.track};
`;

const TimelineRange = styled(Knobs)`
    width: calc(57% - 5px);
`;

const LockIcon = () => (
    <Svg w={20} h={26}>
        <path d="M4 11V7A6 6 0 0 1 15 4" fill="none" stroke={colors.icon} strokeWidth="3" />
        <path d="M0 10H20V25H0ZM10 13A3 3 0 0 0 9 18V22H12V18A3 3 0 0 0 10 13Z" fillRule="evenodd" />
    </Svg>
);
const SyncIcon = () => (
    <Svg w={24} h={20} fill="none" stroke={colors.icon} strokeWidth="2">
        <path d="M1 2H14V7H1ZM1 12H14V17H1Z" />
        <path d="M14 4H23V15H14" strokeWidth="3" />
    </Svg>
);
const EyeIcon = () => (
    <Svg w={26} h={18}>
        <path d="M0 9Q13 -8 26 9Q13 26 0 9Z" />
        <circle cx="13" cy="9" r="6" fill={colors.panel} />
        <circle cx="15" cy="8" r="2" />
    </Svg>
);
const MicIcon = () => (
    <Svg w={18} h={28}>
        <rect x="5" y="0" width="9" height="17" rx="4" />
        <path d="M1 10V14Q2 21 9 21Q17 21 17 14V10M9 21V27M3 27H15" fill="none" stroke={colors.icon} strokeWidth="2" />
    </Svg>
);

const lanes = [
    { name: "V2", video: true },
    { name: "V1", video: true, on: true, h: 90, thick: true },
    { name: "A1", on: true, source: "A1", clip: true },
    { name: "A2", on: true },
    { name: "A3", on: true, cut: true, h: 18 },
];

const times = [
    "00;00;00;00",
    "00;00;32;00",
    "00;01;04;02",
    "00;01;36;02",
    "00;02;08;04",
    "00;02;40;04",
    "00;03;12;06",
];

// x position and depth of each dip in the wave form
const bumps = [
    [2, 4], [6, 2], [11, 3], [17, 2], [22, 5], [31, 3], [36, 2], [42, 2], [53, 1], [58, 2], [62, 4], [67, 3],
    [267, 1], [273, 1], [365, 1], [372, 1], [425, 2], [429, 3], [432, 5], [620, 1], [642, 1], [664, 3], [668, 4],
    [671, 6], [696, 3], [701, 2], [706, 3], [710, 2], [743, 4], [841, 2], [861, 1],
];

function Lane({ name, video, on, source, clip, cut, h, thick }) {
    return (
        <TrackLane $h={h} $thick={thick} $last={cut}>
            <TrackHead>
                {source ? <Patch $on>{source}</Patch> : <span />}
                {cut ? (
                    <span />
                ) : (
                    <button aria-label={`${name} ロック`}>
                        <LockIcon />
                    </button>
                )}
                <Patch $on={on} $cut={cut} aria-label={name}>
                    {cut ? "" : name}
                </Patch>
                {!cut && (
                    <>
                        <button aria-label="同期ロック">
                            <SyncIcon />
                        </button>
                        {video ? (
                            <button aria-label="トラック出力">
                                <EyeIcon />
                            </button>
                        ) : (
                            <>
                                <Mode>M</Mode>
                                <Mode>S</Mode>
                                <button aria-label="ボイスオーバー">
                                    <MicIcon />
                                </button>
                            </>
                        )}
                    </>
                )}
            </TrackHead>
            {clip && (
                <Clip $w={90.2}>
                    <svg height="80" viewBox="0 0 920 80" preserveAspectRatio="none" aria-hidden="true">
                        <rect width="920" height="80" fill="#385718" />
                        <path d="M0 1H919V80" fill="none" stroke="#50752f" strokeWidth="2" />
                        <path d="M0 36H908L914 54H920V56H0ZM0 60H908L918 80H0Z" fill="#a6cb80" />
                        <path d="M0 36H908V38H0ZM0 60H908V62H0Z" fill="#80a25c" />
                        {bumps.map(([x, d]) => (
                            <path key={x} d={`M${x} 36h3v${d}h-3zM${x} 60h3v${d}h-3z`} fill="#385718" />
                        ))}
                        <rect x="2" y="43" width="918" height="2" fill="#fff" />
                        <rect x="2" y="45" width="918" height="2" fill="#000" />
                        <path d="M0 0H9Q8 7 0 8Z" fill="#fff" />
                    </svg>
                    <ClipBadges>
                        <Svg w={18} h={20} fill="none" stroke="#e6efdc" strokeWidth="2">
                            <path d="M6 15V2L16 6V17" />
                            <circle cx="4" cy="15" r="2" strokeWidth="3" />
                            <circle cx="14" cy="17" r="2" strokeWidth="3" />
                        </Svg>
                        fx
                    </ClipBadges>
                </Clip>
            )}
        </TrackLane>
    );
}

function Timeline() {
    return (
        <TimelinePanel>
            <SequenceTabs $h={46}>
                <button aria-label="閉じる">
                    <Svg w={12} h={12}>
                        <path d="M2 2L10 10M10 2L2 10" stroke={colors.icon} strokeWidth="2" />
                    </Svg>
                </button>
                <SeqSwatch />
                <Tab $active $gap={19}>
                    シーケンス 15
                    <Burger />
                </Tab>
            </SequenceTabs>
            <SeqTime>
                <Timecode $big>00;01;15;25</Timecode>
            </SeqTime>
            <TimeHeader>
                <SeqTools>
                    <SeqTool $on aria-label="ネスト">
                        <SequenceIcon mono />
                    </SeqTool>
                    <SeqTool $on aria-label="スナップ">
                        <Svg w={20} h={24} fill="none" strokeWidth="5">
                            <path d="M3 18V10A7 7 0 0 1 17 10V18" stroke={colors.bright} />
                            <path d="M3 18V24M17 18V24" stroke="#858585" />
                        </Svg>
                    </SeqTool>
                    <SeqTool $on aria-label="リンクされた選択">
                        <Svg w={30} h={28} fill={colors.bright}>
                            <path d="M0 0H8V10H0ZM11 0H28V10H22L12 2ZM0 12H8V14H2V20H8V22H0Z" />
                            <path d="M11 4L30 19L20 21L11 28Z" />
                        </Svg>
                    </SeqTool>
                    <SeqTool aria-label="マーカーを追加">
                        <Svg w={14} h={18}>
                            <path d="M0 1H14V12L7 18L0 12Z" />
                        </Svg>
                    </SeqTool>
                    <SeqTool aria-label="表示設定">
                        <WrenchIcon />
                    </SeqTool>
                    <SeqTool aria-label="キャプション">
                        <Svg w={32} h={20}>
                            <rect width="32" height="20" rx="3" fill="#6a6a6a" />
                            <path d="M14 7Q6 3 6 10Q6 17 14 13M27 7Q19 3 19 10Q19 17 27 13" fill="none" stroke={colors.panel} strokeWidth="3" />
                        </Svg>
                    </SeqTool>
                </SeqTools>
                <TimeRuler>
                    <TimeLabels>
                        {times.map((t) => (
                            <span key={t}>{t}</span>
                        ))}
                    </TimeLabels>
                    <TickRow>
                        <Ticks step={32 / 3} h={22} major={22} minor={10} />
                    </TickRow>
                </TimeRuler>
            </TimeHeader>
            <TrackArea>
                <div>
                    <TrackLane $h={20}>
                        <TrackHead />
                    </TrackLane>
                    {lanes.map((lane) => (
                        <Lane key={lane.name} {...lane} />
                    ))}
                </div>
                <VerticalBars>
                    <VBar $vertical $h={168} $pad="7px 0 0">
                        <Knob />
                        <Knob />
                    </VBar>
                    <VBar $vertical $h={166} $pad="0 0 8px">
                        <Knob />
                        <Knob />
                    </VBar>
                </VerticalBars>
                <PlayheadLayer>
                    <Playhead $at={37.2} $line={378}>
                        <PlayheadMark />
                    </Playhead>
                </PlayheadLayer>
            </TrackArea>
            <TimelineZoom>
                <TimelineRange>
                    <Knob />
                    <Knob />
                </TimelineRange>
            </TimelineZoom>
        </TimelinePanel>
    );
}

/* ---------- master meters ---------- */

const MetersPanel = styled(Panel)`
    padding: 54px 0 0 28px;
`;

const SoloRow = styled.div`
    display: flex;
    justify-content: space-around;
    width: 106px;
    margin-top: 10px;
`;

const master = ["0", "-6", "-12", "-18", "-24", "-30", "-36", "-42"];

function Meters() {
    return (
        <MetersPanel>
            <Svg w={176} h={472} shapeRendering="crispEdges">
                <defs>
                    <MeterGradient id="master" />
                </defs>
                <rect width="106" height="470" fill="#000" />
                <path d="M52 0h2v16h-2zM0 16h106v2H0z" fill={colors.panel} />
                <path d="M0 42h52v2H0zM54 42h52v2H54z" fill="#e9e957" />
                <path d="M0 52h52v416H0zM54 52h52v416H54z" fill="url(#master)" />
                {Array.from({ length: 49 }, (_, i) => (
                    <rect key={i} x="108" y={Math.round(20 + i * 9.3)} width={i % 6 ? 4 : 8} height="2" />
                ))}
                <g fontSize="20">
                    {master.map((t, i) => (
                        <text key={t} x="123" y={31 + Math.round(i * 55.7)}>
                            {t}
                        </text>
                    ))}
                    <text x="124" y="468">
                        dB
                    </text>
                </g>
            </Svg>
            <SoloRow>
                <Mode>S</Mode>
                <Mode>S</Mode>
            </SoloRow>
        </MetersPanel>
    );
}

/* hand-drawn notes over the window */
const Notes = styled.svg`
    position: absolute;
    inset: 0;
    width: 100%;
    height: 100%;
    pointer-events: none;
`;

function RedNotes() {
    return (
        <Notes
            viewBox="0 0 2518 1997"
            preserveAspectRatio="none"
            fill="none"
            stroke="#ff0000"
            strokeWidth="10"
            strokeLinecap="round"
            strokeLinejoin="round"
            aria-hidden="true"
        >
            <path d="M510 116C535 114 550 115 565 120S605 125 620 118S665 112 700 111S755 107 775 116S800 122 818 122" />
            <path d="M180 1296H132C115 1296 95 1288 71 1280C50 1272 38 1262 29 1252C15 1232 12 1190 11 1155C12 1110 25 1045 42 1010C55 975 70 957 93 946C115 932 150 926 180 927C205 928 218 938 228 947C238 962 243 980 246 1030C248 1090 250 1150 253 1210C256 1260 255 1264 245 1275C230 1290 212 1300 190 1303C175 1304 160 1302 148 1300" />
            <path d="M821 923C850 918 890 898 935 888C960 885 985 886 1003 887C1025 893 1029 915 1031 935C1035 960 1038 1010 1038 1050C1036 1110 1034 1160 1032 1200C1030 1240 1018 1262 1000 1274C975 1288 930 1294 896 1303C870 1304 850 1302 837 1292C820 1282 817 1270 817 1248C812 1225 806 1215 805 1195C803 1100 804 1010 804 925" />
            <path d="M2387 1991C2365 1970 2345 1955 2333 1936C2315 1895 2303 1860 2292 1835C2278 1810 2276 1790 2273 1755C2271 1700 2266 1620 2263 1565C2262 1510 2259 1450 2264 1425C2270 1398 2300 1380 2335 1374C2365 1370 2400 1369 2415 1375C2445 1386 2465 1410 2480 1440C2490 1465 2498 1490 2501 1530C2503 1590 2502 1660 2505 1720C2508 1780 2512 1820 2506 1850C2498 1890 2475 1940 2445 1975C2430 1990 2415 1993 2390 1995" />
        </Notes>
    );
}

function App() {
    return (
        <Page>
            <GlobalStyle />
            <AppTitleBar />
            <TopRow>
                <Mixer />
                <ProgramMonitor />
            </TopRow>
            <BottomRow>
                <Project />
                <Toolbar />
                <Timeline />
                <Meters />
            </BottomRow>
            <StatusBar />
            <RedNotes />
        </Page>
    );
}

export default App;
